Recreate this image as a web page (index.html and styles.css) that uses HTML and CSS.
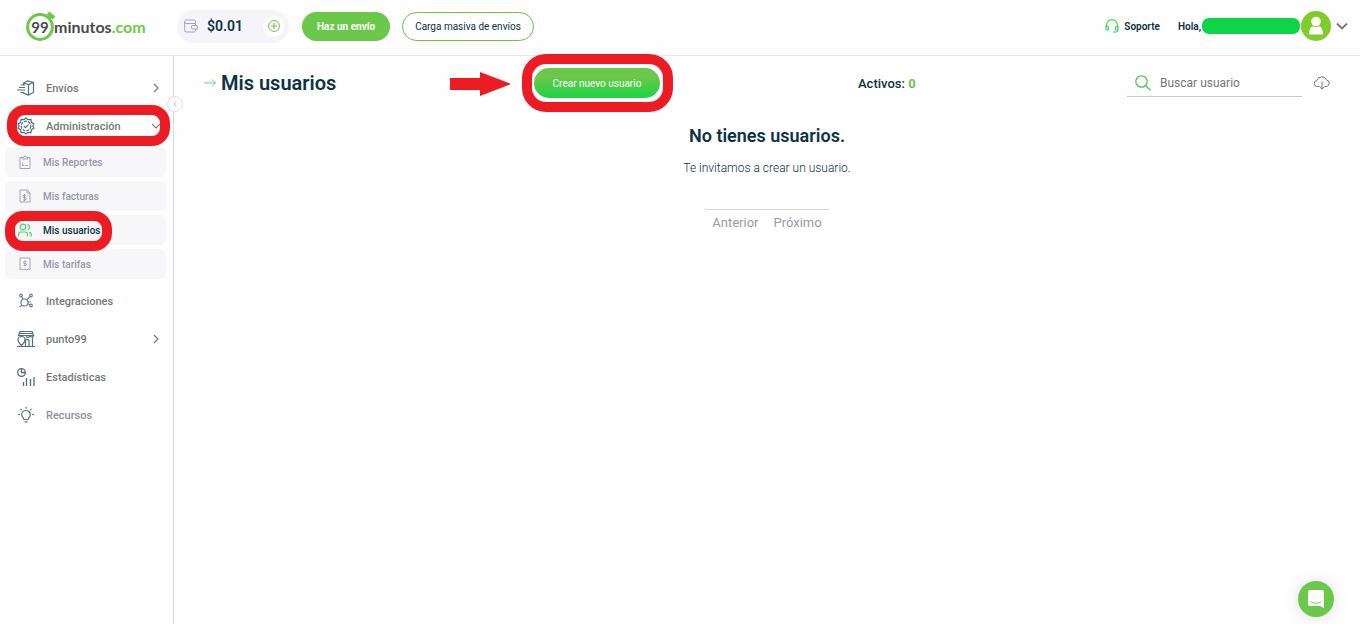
FILE: index.html
```html
<!DOCTYPE html>
<html lang="es">
<head>
    <meta charset="UTF-8">
    <meta name="viewport" content="width=device-width, initial-scale=1.0">
    <title>Mis usuarios | 99minutos.com</title>
    <link rel="stylesheet" href="styles.css">
</head>
<body>
    <!-- Top bar -->
    <header class="topbar">
        <a href="#" class="logo">
            <span class="logo-watch">
                <svg width="32" height="32" viewBox="0 0 32 32" fill="none" stroke="#6cc84a">
                    <circle cx="14" cy="17" r="12.4" stroke-width="3"/>
                    <path d="M22 3l6 5" stroke-width="4"/>
                    <path d="M22 9l3-3" stroke-width="3"/>
                </svg>
                <span class="logo-number">99</span>
            </span>
            <span class="logo-text">minutos<span class="logo-com">.com</span></span>
        </a>

        <div class="wallet">
            <svg width="14" height="14" viewBox="0 0 14 14" fill="none" stroke="#a3a1b8">
                <path d="M11.5 4.5v-2A1.5 1.5 0 0 0 10 1H2A1.5 1.5 0 0 0 .7 2.5v9A1.5 1.5 0 0 0 2 13h8a1.5 1.5 0 0 0 1.5-1.5V10M.7 3a1.5 1.5 0 0 0 1.5 1.5h9.300v2"/>
                <path d="M13.3 6.5H9A1.7 1.7 0 0 0 9 10h4.300z"/>
            </svg>
            <span class="amount">$0.01</span>
            <button class="add-btn" aria-label="Agregar saldo">
                <svg width="12" height="12" viewBox="0 0 12 12" fill="none" stroke="#6cc04a">
                    <circle cx="6" cy="6" r="5.4"/>
                    <path d="M6 3v6M3 6h6"/>
                </svg>
            </button>
        </div>
        <button class="btn btn-solid">Haz un envío</button>
        <button class="btn btn-outline">Carga masiva de envíos</button>

        <div class="account">
            <a href="#" class="support">
                <svg width="14" height="14" viewBox="0 0 14 14" fill="none" stroke="#3ccf5f" stroke-width="1.2">
                    <path d="M1.5 8V6.200a5.500 5.500 0 0 1 11 0V8M12.500 11v.5a1.500 1.500 0 0 1-1.500 1.500H8"/>
                    <path d="M1 7.500h1.500a1 1 0 0 1 1 1V10a1 1 0 0 1-1 1H2a1 1 0 0 1-1-1zM13 7.500h-1.500a1 1 0 0 0-1 1V10a1 1 0 0 0 1 1h.5a1 1 0 0 0 1-1z"/>
                </svg>
                Soporte
            </a>
            <span class="hello">Hola,</span>
            <span class="user-name"></span>
            <button class="profile-btn" aria-label="Mi cuenta">
                <svg width="30" height="30" viewBox="0 0 30 30">
                    <circle cx="15" cy="15" r="15" fill="#80cc28"/>
                    <circle cx="15" cy="10.5" r="4.8" fill="#fff"/>
                    <path d="M8 23.5c0-4 1-7.500 4-8.300 2 1.200 4 1.200 6 0 3 .8 4 4.300 4 8.300z" fill="#fff"/>
                </svg>
                <svg width="12" height="8" viewBox="0 0 12 8" fill="none" stroke="#777" stroke-width="1.8">
                    <path d="M1 1.500l5 5 5-5"/>
                </svg>
            </button>
        </div>
    </header>

    <div class="layout">
        <!-- Side menu -->
        <aside class="sidebar">
            <button class="collapse-btn" aria-label="Ocultar menú">
                <svg width="4" height="6" viewBox="0 0 4 6" fill="none" stroke="#bbb"><path d="M3.500.5L1 3l2.500 2.500"/></svg>
            </button>
            <nav>
                <a href="#" class="menu-item">
                    <svg width="18" height="16" viewBox="0 0 18 16" fill="none" stroke="#52707c" stroke-width="1.2">
                        <path d="M6.500 5V3l4-2 6 1.500v10l-5 2.500-5-2v-1M6.500 3l5 1.500 5-2M11.500 4.500V15"/>
                        <path d="M3.500 5H8M2 7.500h6M0 10h8M3.500 12.500H7"/>
                    </svg>
                    <span class="menu-label">Envíos</span>
                    <svg class="chevron" width="8" height="10" viewBox="0 0 8 10"><path d="M2 1l4 4-4 4"/></svg>
                </a>
                <a href="#" class="menu-item">
                    <svg width="18" height="18" viewBox="0 0 18 18" fill="none" stroke="#52707c" stroke-width="1.2">
                        <path d="M9 1l2 1.700 3-.4.4 3L17 7l-1.300 2L17 11l-2.600 1.700-.4 3-3-.4L9 17l-2-1.700-3 .4-.4-3L1 11l1.300-2L1 7l2.600-1.700.4-3 3 .4z"/>
                        <circle cx="9" cy="9" r="4.800" stroke-dasharray="3 1"/>
                        <path d="M6.800 9l1.700 1.600 3-3"/>
                    </svg>
                    <span class="menu-label">Administración</span>
                    <svg class="chevron" width="8" height="8" viewBox="0 0 8 8"><path d="M0 2l4 4 4-4"/></svg>
                    <span class="mark mark-menu"></span>
                </a>

                <div class="submenu">
                    <a href="#" class="submenu-item">
                        <svg width="12" height="14" viewBox="0 0 12 14" fill="none" stroke="#a3a1b5">
                            <path d="M3.500 2.500H1v11h10v-11H8.500M3.500 4V2.500h1a1.500 1.500 0 0 1 3 0h1V4zM3.500 8.500v2M3.500 10.500h2M6.500 10.500H9"/>
                        </svg>
                        Mis Reportes
                    </a>
                    <a href="#" class="submenu-item">
                        <svg width="12" height="14" viewBox="0 0 12 14" fill="none" stroke="#a3a1b5">
                            <path d="M1 1h7l3 3v9H1zM8 1v3h3M7 6.200H5a1.200 1.200 0 0 0 0 2.400h1A1.200 1.200 0 0 1 6 11H4M5.500 5v7"/>
                        </svg>
                        Mis facturas
                    </a>
                    <a href="#" class="submenu-item active">
                        <svg width="14" height="14" viewBox="0 0 14 14" fill="none" stroke="#4fd36b" stroke-width="1.2">
                            <circle cx="5" cy="4" r="2.800"/>
                            <path d="M.5 13.500v-2A2.500 2.500 0 0 1 3 9h4a2.500 2.500 0 0 1 2.500 2.500v2M9.500 1.300a2.800 2.800 0 0 1 0 5.400M11 9.300a2.500 2.500 0 0 1 2.300 2.400v1.800"/>
                        </svg>
                        Mis usuarios
                        <span class="mark mark-submenu"></span>
                    </a>
                    <a href="#" class="submenu-item">
                        <svg width="12" height="14" viewBox="0 0 12 14" fill="none" stroke="#a3a1b5">
                            <path d="M1 1h10v12l-1.700-1-1.600 1L6 12l-1.700 1-1.600-1L1 13zM7.500 4.500h-2a1 1 0 0 0 0 2h1a1 1 0 0 1 0 2h-2M6 3.500v6"/>
                        </svg>
                        Mis tarifas
                    </a>
                </div>

                <a href="#" class="menu-item">
                    <svg width="18" height="16" viewBox="0 0 18 16" fill="none" stroke="#6b808a" stroke-width="1.2">
                        <circle cx="7.500" cy="9.500" r="3.500"/>
                        <circle cx="4" cy="2.500" r="1.300"/>
                        <circle cx="14" cy="2.500" r="1.300"/>
                        <circle cx="14" cy="12.500" r="1.300"/>
                        <path d="M4.600 3.700L6 6.300M13 3.400L9.800 6.800M10.800 10.800l2 1M5 12l-2.500 2M11 9h3"/>
                    </svg>
                    <span class="menu-label">Integraciones</span>
                </a>
                <a href="#" class="menu-item">
                    <svg width="18" height="18" viewBox="0 0 18 18" fill="none" stroke="#52707c" stroke-width="1.2">
                        <path d="M3 1.500h12l1.500 4h-15zM2 3.500h14M9 6.500c1.500 1.500 3.500 1 4-1 .5 2 3 2 3.500 0M15.500 7.500v9M0 16.500h18"/>
                        <path d="M1 9.500c0-4 7-4 7 0 0 2.500-3.500 6-3.500 6S1 12 1 9.500zM8.500 16v-5.500a2 2 0 0 1 3.500 0V16"/>
                    </svg>
                    <span class="menu-label">punto99</span>
                    <svg class="chevron" width="8" height="10" viewBox="0 0 8 10"><path d="M2 1l4 4-4 4"/></svg>
                </a>
                <a href="#" class="menu-item">
                    <svg width="18" height="18" viewBox="0 0 18 18" fill="none" stroke="#52707c" stroke-width="1.300">
                        <circle cx="4.500" cy="4.500" r="3.800"/>
                        <path d="M4.500 1v3.500H8M6.500 18v-4M9.500 18v-8M13.500 18v-7M17 18V9"/>
                    </svg>
                    <span class="menu-label">Estadísticas</span>
                </a>
                <a href="#" class="menu-item muted">
                    <svg width="18" height="16" viewBox="0 0 18 16" fill="none" stroke="#52707c" stroke-width="1.200">
                        <path d="M7 12.500c0-1.500-2.300-2.300-2.300-4.700a4.300 4.300 0 0 1 8.600 0c0 2.400-2.300 3.200-2.300 4.700zM7.500 14.800h3"/>
                        <path d="M9 0v1.800M3.500 2l1.200 1.200M14.500 2l-1.200 1.200M1 7.500h1.800M15.200 7.500H17"/>
                    </svg>
                    <span class="menu-label">Recursos</span>
                </a>
            </nav>
        </aside>

        <!-- Content -->
        <main class="content">
            <div class="toolbar">
                <h1>
                    <svg width="12" height="10" viewBox="0 0 12 10" fill="none" stroke="#5edb82">
                        <path d="M0 5h11.500M8 1.500L11.500 5 8 8.500"/>
                    </svg>
                    Mis usuarios
                </h1>
                <div class="create">
                    <svg class="mark-arrow" width="61" height="24" viewBox="0 0 61 24">
                        <path d="M0 6h30V0l31 12-31 12v-6H0z" fill="#ed1c24"/>
                    </svg>
                    <button class="create-btn">Crear nuevo usuario</button>
                    <span class="mark mark-create"></span>
                </div>
                <p class="active-count">Activos: <b>0</b></p>
                <div class="search">
                    <label class="search-box">
                        <svg width="16" height="16" viewBox="0 0 16 16" fill="none" stroke="#4cc552" stroke-width="1.200">
                            <circle cx="6.500" cy="6.500" r="5.700"/>
                            <path d="M10.700 10.700l4.800 4.500"/>
                        </svg>
                        <input type="text" placeholder="Buscar usuario" aria-label="Buscar usuario">
                    </label>
                    <button class="download-btn" aria-label="Descargar">
                        <svg width="16" height="14" viewBox="0 0 16 14" fill="none" stroke="#777">
                            <path d="M5.500 10.500h-2a3 3 0 0 1-.5-6A5 5 0 0 1 12.500 4a3.300 3.300 0 0 1 0 6.500h-2M8 5.500V13M5.800 11L8 13.200l2.200-2.200"/>
                        </svg>
                    </button>
                </div>
            </div>

            <section class="empty">
                <h2>No tienes usuarios.</h2>
                <p>Te invitamos a crear un usuario.</p>
                <div class="pager">
                    <button>Anterior</button>
                    <button>Próximo</button>
                </div>
            </section>
        </main>
    </div>

    <button class="chat-btn" aria-label="Abrir chat">
        <svg width="16" height="18" viewBox="0 0 16 18">
            <path d="M2 0h12a2 2 0 0 1 2 2v16l-4-2H2a2 2 0 0 1-2-2V2a2 2 0 0 1 2-2z" fill="#fff"/>
            <path d="M2.500 11.500c3 2.300 8 2.300 11 0" fill="none" stroke="#6cc84a"/>
        </svg>
    </button>
</body>
</html>
```

FILE: styles.css
```css
* {
    margin: 0;
    padding: 0;
    box-sizing: border-box;
}
body {
    min-height: 100vh;
    display: flex;
    flex-direction: column;
    background: #fefefe;
    color: #0b3344;
    font-family: Roboto, "Liberation Sans", sans-serif;
    font-size: 11px;
}
a {
    color: inherit;
    text-decoration: none;
}
button {
    border: none;
    background: none;
    color: inherit;
    font: inherit;
    cursor: pointer;
}
svg {
    flex-shrink: 0;
}

/* Top bar */
.topbar {
    height: 56px;
    display: flex;
    align-items: center;
    padding: 0 12px 3px 26px;
    border-bottom: 1px solid #e8e9ec;
}
.logo {
    display: flex;
    align-items: center;
    width: 151px;
    color: #4a4a4c;
    font-family: Lato, "Open Sans", sans-serif;
    font-weight: 700;
}
.logo-watch {
    display: flex;
    position: relative;
    width: 28px;
}
.logo-number {
    position: absolute;
    top: 6px;
    left: 0;
    width: 28px;
    text-align: center;
    font-size: 15px;
    line-height: 22px;
}
.logo-text {
    font-size: 16px;
}
.logo-com {
    color: #6cc84a;
}
.wallet {
    display: flex;
    align-items: center;
    width: 112px;
    height: 33px;
    margin-right: 13px;
    padding: 0 5px 0 7px;
    border-radius: 17px;
    background: #f5f4fb;
}
.amount {
    margin-left: 9px;
    font-size: 14px;
    font-weight: 600;
}
.add-btn {
    display: flex;
    justify-content: center;
    align-items: center;
    width: 21px;
    height: 21px;
    margin-left: auto;
    border-radius: 50%;
    background: white;
}
.btn {
    height: 29px;
    border-radius: 15px;
}
.btn-solid {
    margin-right: 12px;
    padding: 0 15px;
    background: #6cc84a;
    color: white;
    font-size: 10px;
    font-weight: 700;
}
.btn-outline {
    padding: 0 12px;
    border: 1px solid #6cc04a;
    font-size: 10px;
}
.account {
    display: flex;
    align-items: center;
    margin-left: auto;
    font-size: 10px;
    font-weight: 600;
}
.support {
    display: flex;
    align-items: center;
    gap: 5px;
    margin-right: 18px;
}
.user-name {
    width: 98px;
    height: 16px;
    margin: 0 1px;
    border-radius: 7px;
    background: #10d447;
}
.profile-btn {
    display: flex;
    align-items: center;
    gap: 5px;
}

.layout {
    flex: 1;
    display: flex;
}

/* Side menu */
.sidebar {
    position: relative;
    width: 174px;
    padding: 13px 7px 20px 5px;
    border-right: 1px solid #d8d9dd;
}
.collapse-btn {
    position: absolute;
    top: 40px;
    right: -10px;
    display: flex;
    justify-content: center;
    align-items: center;
    width: 16px;
    height: 16px;
    border: 1px solid #e2e2e6;
    border-radius: 50%;
    background: white;
}
.menu-item {
    position: relative;
    display: flex;
    align-items: center;
    gap: 11px;
    height: 38px;
    padding: 0 6px 0 12px;
    color: #777;
    font-weight: 500;
}
.menu-item.muted {
    color: #8f8f9c;
}
.chevron {
    margin-left: auto;
    fill: none;
    stroke: #777;
    stroke-width: 1.2;
}
.submenu {
    display: flex;
    flex-direction: column;
    gap: 4px;
    margin: 2px 0 3px;
}
.submenu-item {
    position: relative;
    display: flex;
    align-items: center;
    gap: 12px;
    height: 30px;
    padding-left: 14px;
    border-radius: 6px;
    background: #f7f7fa;
    color: #9795a8;
    font-size: 10px;
    font-weight: 500;
}
.submenu-item.active {
    gap: 11px;
    padding-left: 13px;
    color: #0b3344;
}

/* Red highlights */
.mark {
    position: absolute;
    z-index: 1;
    border: 10px solid #ed1c24;
    border-radius: 18px;
    pointer-events: none;
}
.mark-menu {
    top: -2px;
    left: 2px;
    width: 163px;
    height: 41px;
}
.mark-submenu {
    top: -4px;
    left: 0;
    width: 107px;
    height: 40px;
}
.mark-create {
    top: -14px;
    left: -12px;
    width: 151px;
    height: 58px;
    border-radius: 24px;
}
.mark-arrow {
    position: absolute;
    top: 4px;
    left: -84px;
}

/* Content */
.content {
    flex: 1;
    padding: 12px 30px;
}
.toolbar {
    display: grid;
    grid-template-columns: 330fr 324fr 269fr 203fr;
    align-items: center;
}
h1 {
    display: flex;
    align-items: center;
    gap: 5px;
    font-size: 20px;
    font-weight: 600;
}
.create {
    position: relative;
    justify-self: start;
}
.create-btn {
    width: 126px;
    height: 30px;
    border-radius: 15px;
    background: linear-gradient(#6cc84a 30%, #1bd345);
    color: white;
    font-size: 10px;
}
.active-count {
    font-size: 13px;
    font-weight: 500;
}
.active-count b {
    color: #6cc84a;
}
.search {
    display: flex;
    align-items: center;
    gap: 12px;
}
.search-box {
    flex: 1;
    display: flex;
    align-items: center;
    gap: 9px;
    min-width: 0;
    height: 28px;
    padding-left: 8px;
    border-bottom: 1px solid #c8c8d2;
}
.search-box input {
    width: 100%;
    min-width: 0;
    border: none;
    outline: none;
    background: transparent;
    font-family: inherit;
    font-size: 12px;
}
.search-box input::placeholder {
    color: #777;
}
.download-btn {
    display: flex;
}
.empty {
    display: flex;
    flex-direction: column;
    align-items: center;
    padding-top: 27px;
}
h2 {
    font-size: 18px;
    line-height: 22px;
    font-weight: 600;
}
.empty p {
    margin-top: 11px;
    font-size: 12px;
    line-height: 20px;
    font-weight: 300;
}
.pager {
    display: flex;
    gap: 15px;
    margin-top: 31px;
    padding: 5px 7px;
    border-top: 1px solid #d5d5da;
    color: #9b9aa9;
    font-size: 13px;
}

.chat-btn {
    position: fixed;
    right: 26px;
    bottom: 7px;
    display: flex;
    justify-content: center;
    align-items: center;
    width: 36px;
    height: 36px;
    border-radius: 50%;
    background: #6cc84a;
    box-shadow: 0 1px 16px rgba(0, 0, 0, 0.12);
}
```
